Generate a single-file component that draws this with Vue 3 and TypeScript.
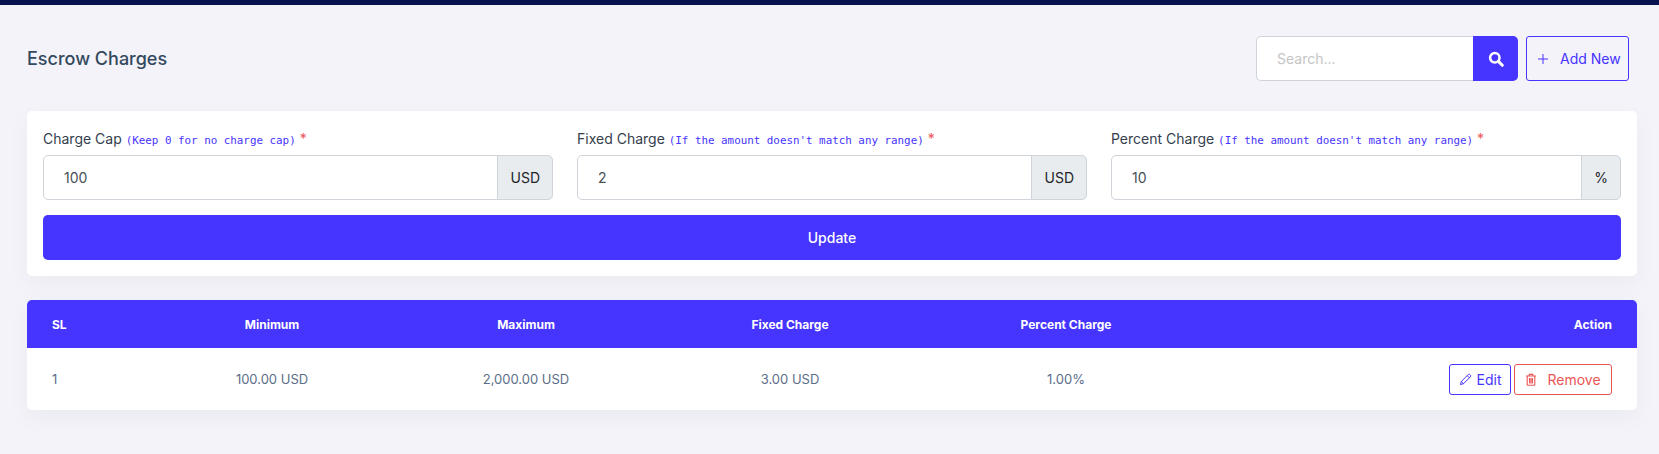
<script setup lang="ts">
interface ChargeField {
  label: string;
  hint: string;
  value: string;
  unit: string;
}

const fields: ChargeField[] = [
  { label: "Charge Cap", hint: "(Keep 0 for no charge cap)", value: "100", unit: "USD" },
  { label: "Fixed Charge", hint: "(If the amount doesn't match any range)", value: "2", unit: "USD" },
  { label: "Percent Charge", hint: "(If the amount doesn't match any range)", value: "10", unit: "%" }
];
</script>

<template>
  <div class="page">
    <div class="topbar"></div>
    <main class="content">
      <header class="head">
        <h1 class="title">Escrow Charges</h1>
        <div class="head-tools">
          <div class="search">
            <input class="search-input" type="text" placeholder="Search..." />
            <button class="search-btn" type="button" aria-label="Search">
              <svg width="16" height="16" viewBox="0 0 16 16" fill="none">
                <circle cx="6.8" cy="6.8" r="4.7" stroke="#fff" stroke-width="2.5" />
                <path d="M10.4 10.4 14.3 14.3" stroke="#fff" stroke-width="3" stroke-linecap="round" />
              </svg>
            </button>
          </div>
          <button class="add-btn" type="button">
            <svg width="12" height="12" viewBox="0 0 12 12" fill="none">
              <path d="M6 1v10M1 6h10" stroke="#4634ff" stroke-width="1" />
            </svg>
            <span>Add New</span>
          </button>
        </div>
      </header>

      <section class="card form-card">
        <div class="fields">
          <div v-for="field in fields" :key="field.label" class="field">
            <label class="label">
              {{ field.label }} <code class="hint">{{ field.hint }}</code> <span class="req">*</span>
            </label>
            <div class="input-group">
              <input class="input" type="text" :value="field.value" />
              <span class="addon">{{ field.unit }}</span>
            </div>
          </div>
        </div>
        <button class="update-btn" type="button">Update</button>
      </section>

      <section class="card table-card">
        <table class="table">
          <colgroup>
            <col style="width: 129px" />
            <col style="width: 232px" />
            <col style="width: 276px" />
            <col style="width: 252px" />
            <col style="width: 300px" />
            <col />
          </colgroup>
          <thead>
            <tr>
              <th class="left">SL</th>
              <th>Minimum</th>
              <th>Maximum</th>
              <th>Fixed Charge</th>
              <th>Percent Charge</th>
              <th class="right">Action</th>
            </tr>
          </thead>
          <tbody>
            <tr>
              <td class="left">1</td>
              <td>100.00 USD</td>
              <td>2,000.00 USD</td>
              <td>3.00 USD</td>
              <td>1.00%</td>
              <td class="right">
                <div class="actions">
                  <button class="act act-edit" type="button">
                    <svg width="13" height="13" viewBox="0 0 13 13" fill="none">
                      <path d="M1.5 11.5l.8-3L9.2 1.6c.5-.5 1.2-.5 1.7 0l.5.5c.5.5.5 1.2 0 1.7L4.5 10.7l-3 .8ZM2.3 8.5l2.2 2.2M8.2 2.6l2.2 2.2" stroke="#4634ff" stroke-width="1" stroke-linejoin="round" />
                    </svg>
                    <span>Edit</span>
                  </button>
                  <button class="act act-remove" type="button">
                    <svg width="12" height="13" viewBox="0 0 12 13" fill="none">
                      <path d="M1 3h10M4.2 3V1.4h3.6V3M2.2 3v8.8c0 .3.2.5.5.5h6.6c.3 0 .5-.2.5-.5V3M4.6 5v5.4M6 5v5.4M7.4 5v5.4" stroke="#eb5555" stroke-width="1.1" />
                    </svg>
                    <span>Remove</span>
                  </button>
                </div>
              </td>
            </tr>
          </tbody>
        </table>
      </section>
    </main>
  </div>
</template>

<style scoped>
.page {
  min-height: 454px;
  background: #f3f3f9;
  font-family: Inter, "Noto Sans", sans-serif;
  color: #34495e;
  overflow: hidden;
}

.topbar {
  height: 5px;
  background: #071251;
}

.content {
  padding: 31px 22px 0 27px;
}

.head {
  display: flex;
  align-items: center;
  justify-content: space-between;
  height: 45px;
  margin-bottom: 30px;
}

.title {
  margin: 0;
  font-size: 18px;
  font-weight: 500;
  color: #34495e;
}

.head-tools {
  display: flex;
  gap: 8px;
  margin-right: 8px;
}

.search {
  display: flex;
  width: 262px;
  height: 45px;
}

.search-input {
  flex: 1;
  min-width: 0;
  box-sizing: border-box;
  padding: 0 20px;
  border: 1px solid #ced4da;
  border-right: 0;
  border-radius: 5px 0 0 5px;
  background: #fff;
  font: 400 14px Inter, sans-serif;
  outline: none;
}

.search-input::placeholder {
  color: #c5c5c5;
}

.search-btn {
  display: flex;
  align-items: center;
  justify-content: center;
  width: 45px;
  padding: 0;
  border: 0;
  border-radius: 0 5px 5px 0;
  background: #4634ff;
}

.add-btn {
  display: flex;
  align-items: center;
  gap: 11px;
  box-sizing: border-box;
  width: 103px;
  height: 45px;
  padding: 0 0 0 10px;
  border: 1px solid #4634ff;
  border-radius: 3px;
  background: transparent;
  color: #4634ff;
  font: 400 14px Inter, sans-serif;
  white-space: nowrap;
}

.card {
  background: #fff;
  border-radius: 5px;
  box-shadow: 0 8px 24px rgba(18, 38, 63, 0.04);
}

.form-card {
  padding: 16px;
  margin-bottom: 24px;
}

.fields {
  display: grid;
  grid-template-columns: repeat(3, 510px);
  column-gap: 24px;
}

.label {
  display: block;
  height: 21px;
  margin-bottom: 7px;
  font-size: 14px;
  line-height: 24px;
  font-weight: 400;
  color: #34404d;
  white-space: nowrap;
}

.hint {
  font-family: "DejaVu Sans Mono", monospace;
  font-size: 10.86px;
  color: #4634ff;
}

.req {
  color: #ea5455;
}

.input-group {
  display: flex;
  height: 45px;
}

.input {
  flex: 1;
  min-width: 0;
  box-sizing: border-box;
  padding: 0 20px;
  border: 1px solid #ced4da;
  border-radius: 5px 0 0 5px;
  background: #fff;
  color: #495057;
  font: 400 14px Inter, sans-serif;
  outline: none;
}

.addon {
  display: flex;
  align-items: center;
  justify-content: center;
  box-sizing: border-box;
  min-width: 38px;
  padding: 0 12px;
  margin-left: -1px;
  border: 1px solid #ced4da;
  border-radius: 0 5px 5px 0;
  background: #e9ecef;
  color: #212529;
  font-size: 14px;
}

.update-btn {
  display: block;
  width: 100%;
  height: 45px;
  margin-top: 15px;
  border: 0;
  border-radius: 5px;
  background: #4634ff;
  color: #fff;
  font: 500 14px Inter, sans-serif;
}

.table-card {
  overflow: hidden;
}

.table {
  width: 100%;
  table-layout: fixed;
  border-collapse: collapse;
}

th {
  height: 48px;
  padding: 0 25px;
  background: #4634ff;
  color: #fff;
  font-size: 12px;
  font-weight: 700;
  text-align: center;
}

td {
  height: 62px;
  padding: 0 25px;
  color: #5b6e88;
  font-size: 13px;
  text-align: center;
}

.left {
  text-align: left;
}

.right {
  text-align: right;
}

.actions {
  display: flex;
  justify-content: flex-end;
  gap: 3px;
}

.act {
  display: flex;
  align-items: center;
  box-sizing: border-box;
  height: 31px;
  padding: 0;
  border-radius: 3px;
  background: transparent;
  font: 400 14px Inter, sans-serif;
}

.act-edit {
  width: 62px;
  justify-content: center;
  gap: 5px;
  border: 1px solid #4634ff;
  color: #4634ff;
}

.act-remove {
  width: 98px;
  justify-content: center;
  gap: 10px;
  border: 1px solid #eb5555;
  color: #eb5555;
}
</style>

<style>
body {
  margin: 0;
}
</style>
